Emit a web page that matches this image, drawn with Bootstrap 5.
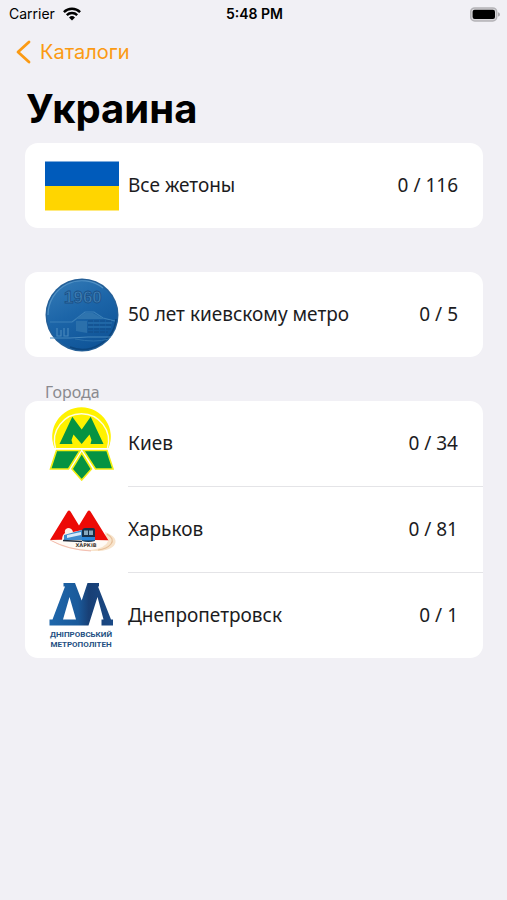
<!DOCTYPE html>
<html lang="ru">
<head>
<meta charset="utf-8">
<meta name="viewport" content="width=device-width, initial-scale=1">
<title>Украина</title>
<link href="https://cdn.jsdelivr.net/npm/bootstrap@5.3.0/dist/css/bootstrap.min.css" rel="stylesheet">
<style>
  body { background: #f1f0f5; color: #000; font-family: "Noto Sans", sans-serif; }
  .status-bar { height: 28px; padding: 0 7px 0 9px; font: 500 14px/28px Inter, sans-serif; }
  .status-bar .carrier { font-weight: 400; }
  .status-bar .clock { font-weight: 600; }
  .back-bar { height: 48px; padding-left: 15px; }
  .back-link { gap: 8px; color: #fb9a13; font: 400 20px/28px Inter, sans-serif; }
  .page-title { margin: 0; padding: 9px 26px 10px; font: 700 40px/48px Inter, sans-serif; }
  .catalog { padding: 0 24px 0 25px; }
  .token-group { --bs-list-group-border-radius: 13px; --bs-list-group-border-width: 0; --bs-list-group-bg: #fff; }
  .token-row { gap: 9px; padding: 0 0 0 20px; color: #1c1c1e; font-size: 19px; line-height: 28px; }
  .token-row .art { width: 74px; height: 74px; }
  .token-row .info { height: 85px; padding: 0 25px 2px 0; }
  .token-row:not(:last-child) .info { height: 86px; border-bottom: 1px solid #e4e4e7; }
  .group-gap { margin-bottom: 44px; }
  .section-label { margin: -18px 0 0; padding: 0 20px; color: #8a8a8f; font-size: 16px; line-height: 18px; font-weight: 400; }
</style>
<script src="https://cdn.jsdelivr.net/npm/bootstrap@5.3.0/dist/js/bootstrap.bundle.min.js"></script>
</head>
<body>
<div class="status-bar row g-0">
  <div class="col d-flex align-items-center carrier">Carrier
    <svg class="ms-2" width="18" height="14" viewBox="0 0 18 14" aria-hidden="true">
      <g fill="none" stroke="#000" stroke-width="2.4"><path d="M.9 5.1a11.5 11.5 0 0 1 16.2 0"/><path d="M3.8 8.2a7.4 7.4 0 0 1 10.4 0"/></g>
      <path d="M9 13.5 6 10.4a4.3 4.3 0 0 1 6 0z"/>
    </svg>
  </div>
  <div class="col-auto clock">5:48 PM</div>
  <div class="col d-flex align-items-center justify-content-end">
    <svg width="30" height="15" viewBox="0 0 30 15" role="img" aria-label="Батарея">
      <rect x=".7" y=".9" width="26" height="13" rx="4" fill="#d8d7db" stroke="#b4b3b7" stroke-width="1.5"/>
      <rect x="2.6" y="2.8" width="22.4" height="9.3" rx="2"/>
      <path d="M28 5.2q2 .5 2 2.2t-2 2.2z" fill="#aaa9ad"/>
    </svg>
  </div>
</div>
<nav class="back-bar d-flex align-items-center">
  <a href="#" class="back-link d-flex align-items-center text-decoration-none">
    <svg width="17" height="24" viewBox="0 0 17 24" aria-hidden="true"><path d="M14 2 3 12l11 10" fill="none" stroke="#fb9a13" stroke-width="2.8" stroke-linecap="round" stroke-linejoin="round"/></svg>
    Каталоги
  </a>
</nav>
<h1 class="page-title">Украина</h1>

<main class="catalog">
  <div class="list-group token-group group-gap">
    <a href="#" class="list-group-item token-row d-flex align-items-center">
      <svg class="art flex-shrink-0" viewBox="0 0 74 74" aria-hidden="true"><path d="M0 12.500h74V37H0z" fill="#005bbb"/><path d="M0 37h74v24.500H0z" fill="#ffd500"/></svg>
      <span class="info d-flex flex-grow-1 align-items-center justify-content-between"><span>Все жетоны</span><span>0 / 116</span></span>
    </a>
  </div>

  <div class="list-group token-group group-gap">
    <a href="#" class="list-group-item token-row d-flex align-items-center">
      <svg class="art flex-shrink-0" viewBox="0 0 74 74" aria-hidden="true">
        <defs><linearGradient id="coin" x1=".2" y1="0" x2=".7" y2="1"><stop offset="0" stop-color="#3279b5"/><stop offset=".45" stop-color="#1c65a8"/><stop offset="1" stop-color="#0e5397"/></linearGradient></defs>
        <circle cx="37" cy="37" r="36.500" fill="#245f97"/>
        <circle cx="37" cy="37" r="35" fill="url(#coin)"/>
        <path d="M3 37A34 34 0 0 1 58 10" fill="none" stroke="#4f8fc3" stroke-width="1.200"/>
        <path d="M71 41A34 34 0 0 1 25 69" fill="none" stroke="#0c467f" stroke-width="1.500"/>
        <g font-family="Liberation Sans, sans-serif" font-weight="700" font-size="17"><text x="19" y="25" fill="#3f7fb5" stroke="#1a4f86" stroke-width=".8">1960</text></g>
        <path d="M5 44h22l4-3 9-7h9l9 6 12 3" fill="none" stroke="#3c80b8" stroke-width="1.100"/>
        <path d="M31 41l9-6h8l11 6z" fill="#2f74ae"/>
        <path d="M31 43h11v12l-11-2z" fill="#2b70ab"/>
        <path d="M43 43h24M43 47h24M43 51h23M43 54h20" stroke="#124d88" stroke-width="1.200" stroke-dasharray="5 1"/>
        <path d="M43 45h24M43 49h23" stroke="#3478b0" stroke-width=".8"/>
        <path d="M12 50v8h4v-6m3-2v8h4v-8M5 60h20l18-1h23" fill="none" stroke="#4787bc" stroke-width="1.200"/>
        <path d="M30 61q20 4 34 0" fill="none" stroke="#2b70ab"/>
      </svg>
      <span class="info d-flex flex-grow-1 align-items-center justify-content-between"><span>50 лет киевскому метро</span><span>0 / 5</span></span>
    </a>
  </div>

  <h2 class="section-label">Города</h2>
  <div class="list-group token-group">
    <a href="#" class="list-group-item token-row d-flex align-items-center">
      <svg class="art flex-shrink-0" viewBox="0 0 74 74" aria-hidden="true">
        <path d="M9.500 41A29.300 29.300 0 1 1 63.500 41z" fill="#fff200"/>
        <path d="M10.500 41A27 27 0 1 1 62.500 41" fill="none" stroke="#fffde0" stroke-width="1.400"/>
        <path d="M14.500 37 27.300 9.700 36.700 22.500 45.700 9.700 58.500 37H45.500L46.500 33 44.500 27.500 36.700 37 28.500 27.500 26.500 33 27.500 37z" fill="#069342"/>
        <g fill="#069342" stroke="#f4ee10" stroke-width="1.600"><path d="M11.500 43.500H35L23.500 62H5.500z"/><path d="M38.500 43.500H62L68 62H50.500z"/><path d="M36.700 46 46.500 62 36.700 73 27 62z"/></g>
      </svg>
      <span class="info d-flex flex-grow-1 align-items-center justify-content-between"><span>Киев</span><span>0 / 34</span></span>
    </a>
    <a href="#" class="list-group-item token-row d-flex align-items-center">
      <svg class="art flex-shrink-0" viewBox="0 0 74 74" aria-hidden="true">
        <path d="M60 39q13 5 10 12-4 8-24 7-27-1-41-11 22 4 41 3 17-3 14-11z" fill="#f8e4cc"/>
        <path d="M62 41q8 5 4 10-4 5-13 6" fill="none" stroke="#e7c09a" stroke-width="1.200"/>
        <path d="M5 47 22.500 18.500q1.500-2 3 0L34 32.500 42.500 18.500q1.500-2 3 0L63.500 47.500z" fill="#ec0a06"/>
        <path d="M5 47q20-1 43 0l15.500.500q-3 8-18 9.500-24-1-40.500-10z" fill="#fffaf5"/>
        <path d="M5 47q19 10 41 11" fill="none" stroke="#efa79c" stroke-width=".7"/>
        <path d="M17 47q0-5 3-7-1-4 3-5 4 0 5 4l9-2v10z" fill="#fff0e8"/>
        <path d="M19 47v-5l18-5v10z" fill="#3f8bcc"/><path d="M22 42l14-3v3l-14 3z" fill="#d5eafa"/>
        <path d="M37 37q1-2 3-2h8q2 0 2 2v11q-7 2-13 0z" fill="#173049"/>
        <path d="M39 37.500h4V42h-4zM44 37.500h4V42h-4z" fill="#86a9bf"/><path d="M37 44h13v3.500H37z" fill="#2b86d8"/>
        <path d="M18 47.500l19 1" stroke="#202b3b" stroke-width="1.600"/>
        <text x="41" y="54" text-anchor="middle" font-family="DejaVu Sans, sans-serif" font-weight="700" font-size="5" fill="#453a34">ХАРКІВ</text>
      </svg>
      <span class="info d-flex flex-grow-1 align-items-center justify-content-between"><span>Харьков</span><span>0 / 81</span></span>
    </a>
    <a href="#" class="list-group-item token-row d-flex align-items-center">
      <svg class="art flex-shrink-0" viewBox="0 0 74 74" aria-hidden="true">
        <defs><linearGradient id="metro"><stop offset="0" stop-color="#1f67ab"/><stop offset=".45" stop-color="#1a5a9b"/><stop offset=".62" stop-color="#183f75"/><stop offset="1" stop-color="#1b4a86"/></linearGradient></defs>
        <path fill="url(#metro)" fill-rule="evenodd" d="M18.500 4H30L36.700 21.500 42.500 4H54V7.500H53L66 40.500H68V46.500H56.500V40.500H58.500L52.500 18 43.500 46.500H4.500V40.500H7.500L20 7.500H18.500zM24.500 18 18 40.500H31z"/>
        <g fill="#244f82" font-family="Roboto, sans-serif" font-weight="700" font-size="8"><text x="36" y="58" text-anchor="middle">ДНІПРОВСЬКИЙ</text><text x="36" y="68" text-anchor="middle">МЕТРОПОЛІТЕН</text></g>
      </svg>
      <span class="info d-flex flex-grow-1 align-items-center justify-content-between"><span>Днепропетровск</span><span>0 / 1</span></span>
    </a>
  </div>
</main>
</body>
</html>
